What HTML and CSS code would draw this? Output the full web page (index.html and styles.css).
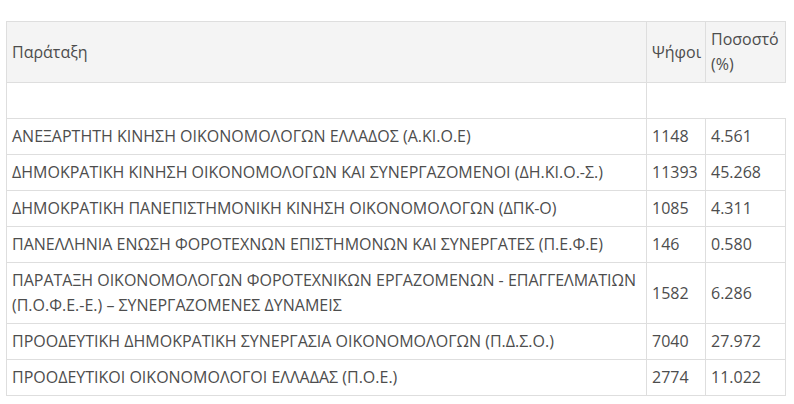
FILE: index.html
```html
<!DOCTYPE html>
<html lang="el">
<head>
<meta charset="utf-8">
<link rel="stylesheet" href="styles.css">
</head>
<body>
<table class="results">
  <thead>
    <tr>
      <th class="c-name">Παράταξη</th>
      <th class="c-votes">Ψήφοι</th>
      <th class="c-pct">Ποσοστό (%)</th>
    </tr>
  </thead>
  <tbody>
    <tr><td>&nbsp;</td></tr>
    <tr><td>ΑΝΕΞΑΡΤΗΤΗ ΚΙΝΗΣΗ ΟΙΚΟΝΟΜΟΛΟΓΩΝ ΕΛΛΑΔΟΣ (Α.ΚΙ.Ο.Ε)</td><td>1148</td><td>4.561</td></tr>
    <tr><td>ΔΗΜΟΚΡΑΤΙΚΗ ΚΙΝΗΣΗ ΟΙΚΟΝΟΜΟΛΟΓΩΝ ΚΑΙ ΣΥΝΕΡΓΑΖΟΜΕΝΟΙ (ΔΗ.ΚΙ.Ο.-Σ.)</td><td>11393</td><td>45.268</td></tr>
    <tr><td>ΔΗΜΟΚΡΑΤΙΚΗ ΠΑΝΕΠΙΣΤΗΜΟΝΙΚΗ ΚΙΝΗΣΗ ΟΙΚΟΝΟΜΟΛΟΓΩΝ (ΔΠΚ-Ο)</td><td>1085</td><td>4.311</td></tr>
    <tr><td>ΠΑΝΕΛΛΗΝΙΑ ΕΝΩΣΗ ΦΟΡΟΤΕΧΝΩΝ ΕΠΙΣΤΗΜΟΝΩΝ ΚΑΙ ΣΥΝΕΡΓΑΤΕΣ (Π.Ε.Φ.Ε)</td><td>146</td><td>0.580</td></tr>
    <tr><td>ΠΑΡΑΤΑΞΗ ΟΙΚΟΝΟΜΟΛΟΓΩΝ ΦΟΡΟΤΕΧΝΙΚΩΝ ΕΡΓΑΖΟΜΕΝΩΝ - ΕΠΑΓΓΕΛΜΑΤΙΩΝ (Π.Ο.Φ.Ε.-Ε.) – ΣΥΝΕΡΓΑΖΟΜΕΝΕΣ ΔΥΝΑΜΕΙΣ</td><td>1582</td><td>6.286</td></tr>
    <tr><td>ΠΡΟΟΔΕΥΤΙΚΗ ΔΗΜΟΚΡΑΤΙΚΗ ΣΥΝΕΡΓΑΣΙΑ ΟΙΚΟΝΟΜΟΛΟΓΩΝ (Π.Δ.Σ.Ο.)</td><td>7040</td><td>27.972</td></tr>
    <tr><td>ΠΡΟΟΔΕΥΤΙΚΟΙ ΟΙΚΟΝΟΜΟΛΟΓΟΙ ΕΛΛΑΔΑΣ (Π.Ο.Ε.)</td><td>2774</td><td>11.022</td></tr>
  </tbody>
</table>
</body>
</html>
```

FILE: styles.css
```css
html, body {
  margin: 0;
  background: #fff;
}
body {
  padding: 21px 8px 0 6px;
  font-family: "Open Sans", "Noto Sans", sans-serif;
  font-size: 16px;
  color: #4d4d4d;
}
.results {
  border-collapse: collapse;
  width: 780px;
  table-layout: fixed;
}
.results th,
.results td {
  border: 1px solid #dedede;
  padding: 5px;
  line-height: 25px;
  text-align: left;
  vertical-align: middle;
  font-weight: 400;
}
.results thead th {
  background: #f4f4f4;
}
.c-name { width: auto; }
.c-votes { width: 48px; }
.c-pct { width: 69px; }
```
